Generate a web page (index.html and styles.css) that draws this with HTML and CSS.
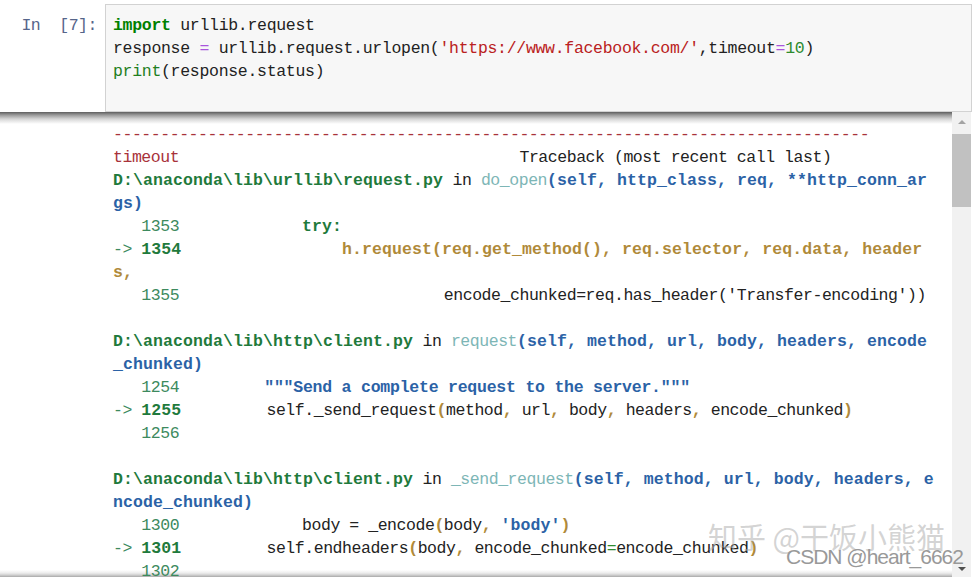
FILE: index.html
```html
<!DOCTYPE html>
<html>
<head>
<meta charset="utf-8">
<link rel="stylesheet" href="styles.css">
</head>
<body>
<div class="nb">
  <div class="cell">
    <pre class="prompt">In  [7]:</pre>
    <div class="input"><pre class="src"><span class="kw">import</span> urllib.request
response <span class="op">=</span> urllib.request.urlopen(<span class="str">'https://www.facebook.com/'</span>,timeout<span class="op">=</span><span class="num">10</span>)
<span class="bi">print</span>(response.status)</pre></div>
  </div>
  <div class="out-area">
    <div class="out-scroll"><pre class="tb"><span class="r">--------------------------------------------------------------------------------</span>
<span class="r">timeout</span>                                    Traceback (most recent call last)
<span class="gb">D:\anaconda\lib\urllib\request.py</span> in <span class="c">do_open</span><span class="bb">(self, http_class, req, **http_conn_ar</span>
<span class="bb">gs)</span>
<span class="ln">   1353</span>             <span class="gb">try:</span>
<span class="ln">-&gt; </span><span class="lb">1354</span>                 <span class="yb">h.request(req.get_method(), req.selector, req.data, header</span>
<span class="yb">s,</span>
<span class="ln">   1355</span>                            encode_chunked=req.has_header('Transfer-encoding'))

<span class="gb">D:\anaconda\lib\http\client.py</span> in <span class="c">request</span><span class="bb">(self, method, url, body, headers, encode</span>
<span class="bb">_chunked)</span>
<span class="ln">   1254</span>         <span class="bd">"""Send a complete request to the server."""</span>
<span class="ln">-&gt; </span><span class="lb">1255</span>         self._send_request<span class="y">(</span>method<span class="y">,</span> url<span class="y">,</span> body<span class="y">,</span> headers<span class="y">,</span> encode_chunked<span class="y">)</span>
<span class="ln">   1256</span>

<span class="gb">D:\anaconda\lib\http\client.py</span> in <span class="c">_send_request</span><span class="bb">(self, method, url, body, headers, e</span>
<span class="bb">ncode_chunked)</span>
<span class="ln">   1300</span>             body = _encode<span class="y">(</span>body<span class="y">,</span> <span class="bb">'body'</span><span class="y">)</span>
<span class="ln">-&gt; </span><span class="lb">1301</span>         self.endheaders<span class="y">(</span>body<span class="y">,</span> encode_chunked<span class="eq">=</span>encode_chunked<span class="y">)</span>
<span class="ln">   1302</span></pre></div>
    <div class="vscroll">
      <div class="sb-btn"><span class="arrow-up"></span></div>
      <div class="sb-thumb"></div>
      <div class="sb-btn sb-bottom"><span class="arrow-down"></span></div>
    </div>
    <div class="wm-zhihu">知乎 @干饭小熊猫</div>
    <div class="wm-csdn">CSDN @heart_6662</div>
  </div>
</div>
</body>
</html>
```

FILE: styles.css
```css
html, body {
  margin: 0;
  padding: 0;
  background: #ffffff;
}

.nb {
  width: 974px;
  height: 577px;
  overflow: hidden;
  display: flex;
  flex-direction: column;
}

pre {
  margin: 0;
}

.cell {
  display: flex;
  padding-top: 4px;
  height: 108px;
}

.prompt {
  width: 97px;
  padding-right: 8px;
  text-align: right;
  font-family: "Liberation Mono", monospace;
  font-size: 16.5px;
  letter-spacing: -0.45px;
  line-height: 23px;
  padding-top: 10px;
  color: #56658a;
  box-sizing: content-box;
}

.input {
  flex: 1;
  margin-right: 2px;
  height: 108px;
  box-sizing: border-box;
  background: #f7f7f7;
  border: 1px solid #d2d2d2;
  padding: 9px 7px 0 7px;
}

.src {
  font-family: "Liberation Mono", monospace;
  font-size: 16.5px;
  letter-spacing: -0.3px;
  line-height: 23px;
  color: #222222;
}

.src .kw { color: #008000; font-weight: bold; }
.src .op { color: #aa55dd; }
.src .str { color: #ba2121; }
.src .num { color: #2e8b2e; }
.src .bi { color: #1f7f1f; }

.out-area {
  position: relative;
  display: flex;
  height: 465px;
}

.out-scroll {
  flex: 1;
  overflow: hidden;
  background-image:
    linear-gradient(to bottom, #5e5e5e 0px, #9a9a9a 3px, #d6d6d6 7px, rgba(255,255,255,0) 12px),
    linear-gradient(to top, #a8a8a8 0px, #d0d0d0 2px, #ececec 4px, rgba(255,255,255,0) 7px);
  background-repeat: no-repeat;
  background-size: 100% 12px, 100% 7px;
  background-position: top left, bottom left;
}

.tb {
  padding: 11px 0 0 113px;
  font-family: "Liberation Mono", monospace;
  font-size: 16.5px;
  letter-spacing: -0.45px;
  line-height: 23px;
  color: #222222;
}

.tb .r { color: #a8323a; }
.tb .gb { color: #1f7a3c; font-weight: bold; letter-spacing: 0.1px; }
.tb .bb { color: #2b62a6; font-weight: bold; letter-spacing: 0.1px; }
.tb .bd { color: #2b62a6; font-weight: bold; letter-spacing: -0.23px; }
.tb .c { color: #7db6b6; }
.tb .ln { color: #3d8a5e; }
.tb .lb { color: #1f7a3c; font-weight: bold; letter-spacing: 0.1px; }
.tb .yb { color: #b08a3a; font-weight: bold; letter-spacing: 0.1px; }
.tb .y { color: #b08a3a; font-weight: bold; }
.tb .eq { color: #2e8b2e; }

.vscroll {
  width: 19px;
  margin-right: 3px;
  background: #f1f1f1;
  display: flex;
  flex-direction: column;
}

.sb-btn {
  height: 20px;
  display: flex;
  align-items: center;
  justify-content: center;
}

.sb-bottom {
  margin-top: auto;
  align-items: flex-end;
  padding-bottom: 6px;
  box-sizing: border-box;
}

.arrow-up {
  width: 0;
  height: 0;
  border-left: 4px solid transparent;
  border-right: 4px solid transparent;
  border-bottom: 4px solid #a3a3a3;
}

.arrow-down {
  width: 0;
  height: 0;
  border-left: 4px solid transparent;
  border-right: 4px solid transparent;
  border-top: 4px solid #505050;
}

.sb-thumb {
  margin-top: 2px;
  height: 73px;
  background: #c1c1c1;
}

.wm-zhihu {
  position: absolute;
  left: 708px;
  top: 406px;
  font-family: "Noto Sans CJK SC", sans-serif;
  font-size: 29px;
  line-height: 36px;
  color: rgba(175, 175, 175, 0.55);
  white-space: nowrap;
}

.wm-csdn {
  position: absolute;
  left: 786px;
  top: 433px;
  font-family: "Liberation Sans", sans-serif;
  font-size: 21px;
  line-height: 24px;
  letter-spacing: -1px;
  color: #999999;
  white-space: nowrap;
}
```
